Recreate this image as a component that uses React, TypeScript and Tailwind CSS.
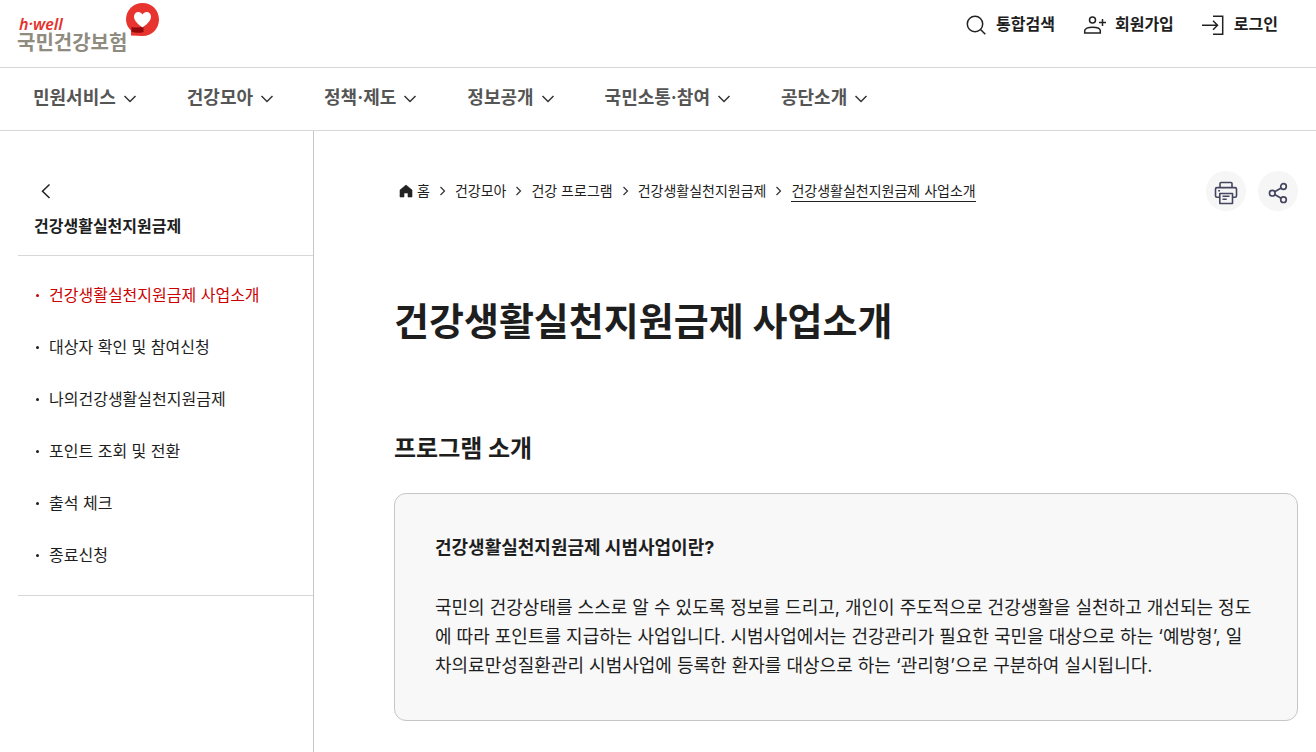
const navItems = ['민원서비스', '건강모아', '정책·제도', '정보공개', '국민소통·참여', '공단소개'];

const sideItems = [
    '건강생활실천지원금제 사업소개',
    '대상자 확인 및 참여신청',
    '나의건강생활실천지원금제',
    '포인트 조회 및 전환',
    '출석 체크',
    '종료신청',
];

const crumbs = ['건강모아', '건강 프로그램', '건강생활실천지원금제'];

function Logo() {
    return (
        <a href="#" className="relative block pt-4 leading-none">
            <span className="block pl-0.5 font-['Noto_Sans'] text-[16px] leading-4 font-semibold text-[#e4322d] italic">h·well</span>
            <span className="block text-[20px] leading-[22px] font-bold text-[#8f8c7f]">국민건강보험</span>
            {/* Speech balloon with heart */}
            <svg className="absolute top-0.5 left-[108px]" width="36" height="36" viewBox="0 0 36 36">
                <path d="M17.5 1C27 1 34 8.300 34 17.500S27 34 17.500 34L6 33.500V28.500C2.800 25.500 1 21.800 1 17.500 1 8.300 8.300 1 17.500 1Z" fill="#e7342f" />
                <path d="M6.500 25C10 25.800 14 25.800 18.500 24.800V30C14.500 31.300 10.500 31 6.500 29.800Z" fill="#94070c" />
                <path d="M17.500 25.500C13.500 22.500 9 19 9 14.500 9 11.800 11 10 13.300 10 15.200 10 16.700 11 17.500 12.600 18.300 11 19.800 10 21.700 10 24 10 26 11.800 26 14.500 26 19 21.500 22.500 17.500 25.500Z" fill="#fff" />
            </svg>
        </a>
    );
}

function SearchIcon() {
    return (
        <svg width="24" height="24" viewBox="0 0 24 24" fill="none" stroke="#222" strokeWidth="1.5">
            <circle cx="11" cy="12" r="7.700" />
            <path d="M16.500 17.500L21.300 22.300" />
        </svg>
    );
}

function JoinIcon() {
    return (
        <svg width="24" height="24" viewBox="0 0 24 24" fill="none" stroke="#222" strokeWidth="1.5">
            <circle cx="9.500" cy="8" r="3" />
            <path d="M1.700 21V18.800C1.700 16.500 5 15.200 9.500 15.200S17.300 16.500 17.300 18.800V21Z" />
            <path d="M16 10.500H23M19.500 7V14" />
        </svg>
    );
}

function LoginIcon() {
    return (
        <svg width="24" height="24" viewBox="0 0 24 24" fill="none" stroke="#222" strokeWidth="1.5">
            <path d="M11 4.200H20.700V22.200H11" />
            <path d="M0 13.200H15.500M11 8.700L15.500 13.200L11 17.700" />
        </svg>
    );
}

function PrintIcon() {
    return (
        <svg width="24" height="24" viewBox="0 0 24 24" fill="none" stroke="#45455f" strokeWidth="1.6" strokeLinejoin="round">
            <path d="M6 6.500V2.500Q6 1.500 7 1.500H17Q18 1.500 18 2.500V6.500" />
            <path d="M5.500 16.300H3Q1.500 16.300 1.500 14.800V8Q1.500 6.600 3 6.600H21Q22.500 6.600 22.500 8V14.800Q22.500 16.300 21 16.300H18.500" />
            <path d="M5.800 12.500H18.500V22.500H5.800ZM8.500 15.200H15.500M8.500 18.200H12.700M4.200 9.700H6" />
        </svg>
    );
}

function ShareIcon() {
    return (
        <svg width="24" height="24" viewBox="0 0 24 24" fill="none" stroke="#45455f" strokeWidth="1.7">
            <circle cx="17.500" cy="5.500" r="2.800" />
            <circle cx="6.300" cy="12.200" r="2.800" />
            <circle cx="17.500" cy="18.700" r="2.800" />
            <path d="M8.700 10.700L15.100 6.900M8.700 13.600L15.100 17.300" />
        </svg>
    );
}

function Separator() {
    return (
        <svg width="25" height="14" viewBox="0 0 25 14" fill="none" stroke="#333" strokeWidth="1.2">
            <path d="M10.500 3L14.500 7L10.500 11" />
        </svg>
    );
}

function Header() {
    return (
        <header>
            <div className="flex h-[68px] items-start justify-between border-b border-[#d8d8d8] pr-[38px] pl-[17px]">
                <Logo />
                <div className="flex gap-7 pt-3 text-[16px] leading-6 font-bold">
                    <a href="#" className="flex gap-2"><SearchIcon />통합검색</a>
                    <a href="#" className="flex gap-2"><JoinIcon />회원가입</a>
                    <a href="#" className="flex gap-2"><LoginIcon />로그인</a>
                </div>
            </div>
            <nav className="flex gap-[49px] border-b border-[#d8d8d8] px-[33px] pt-4 pb-[18px]">
                {navItems.map(item => (
                    <button key={item} type="button" className="flex items-center gap-1.5 text-[18px] leading-7 font-bold text-[#555]">
                        {item}
                        <svg width="16" height="16" viewBox="0 0 16 16" fill="none" stroke="#333" strokeWidth="1.5">
                            <path d="M2.500 6L8 11.500L13.500 6" />
                        </svg>
                    </button>
                ))}
            </nav>
        </header>
    );
}

function Sidebar() {
    return (
        <aside className="w-[314px] shrink-0 border-r border-[#c6c6c6] pl-[18px]">
            <div className="border-b border-[#d8d8d8] px-4 pt-12 pb-[17px]">
                <button type="button" aria-label="이전" className="block h-6 w-6">
                    <svg width="24" height="24" viewBox="0 0 24 24" fill="none" stroke="#222" strokeWidth="1.5">
                        <path d="M15.500 5.500L8.500 12.200L15.500 19" />
                    </svg>
                </button>
                <h2 className="mt-[11px] text-[16px] leading-6 font-bold">건강생활실천지원금제</h2>
            </div>
            <ul className="border-b border-[#d8d8d8] px-4 pt-[13px] pb-3.5">
                {sideItems.map((item, i) => (
                    <li key={item}>
                        <a
                            href="#"
                            className={`flex items-center gap-2.5 pl-0.5 text-[16px] leading-[52px] ${i === 0 ? 'text-[#cc0000]' : ''}`}
                        >
                            <span className="h-[3px] w-[3px] rounded-full bg-current" />
                            {item}
                        </a>
                    </li>
                ))}
            </ul>
        </aside>
    );
}

function Breadcrumb() {
    return (
        <nav className="flex items-center pl-[5px] text-[14px] leading-5">
            <a href="#" className="flex items-center gap-1">
                <svg width="14" height="14" viewBox="0 0 14 14" fill="#222">
                    <path d="M7 1L13 6V13H9V9H5V13H1V6Z" stroke="#222" strokeWidth="0.6" strokeLinejoin="round" />
                </svg>
                홈
            </a>
            {crumbs.map(c => (
                <span key={c} className="flex items-center">
                    <Separator />
                    <a href="#">{c}</a>
                </span>
            ))}
            <Separator />
            <a href="#" className="border-b border-[#222]">건강생활실천지원금제 사업소개</a>
        </nav>
    );
}

export default function App() {
    return (
        <div className="flex min-h-screen flex-col bg-white font-[Inter,'Noto_Sans_CJK_KR',sans-serif] text-[#1e1e1e]">
            <Header />
            <div className="flex flex-1">
                <Sidebar />
                <main className="min-w-0 flex-1 pt-10 pr-[18px] pb-8 pl-20">
                    <div className="flex items-center justify-between">
                        <Breadcrumb />
                        <div className="flex gap-3">
                            <button type="button" aria-label="인쇄" className="flex h-10 w-10 items-center justify-center rounded-full bg-[#f6f6f6] pt-1">
                                <PrintIcon />
                            </button>
                            <button type="button" aria-label="공유" className="flex h-10 w-10 items-center justify-center rounded-full bg-[#f6f6f6] pt-1">
                                <ShareIcon />
                            </button>
                        </div>
                    </div>
                    <h1 className="mt-[82px] text-[38px] leading-[56px] font-bold">건강생활실천지원금제 사업소개</h1>
                    <h2 className="mt-[82px] text-[24px] leading-9 font-bold">프로그램 소개</h2>
                    <section className="mt-[26px] rounded-xl border border-[#c6c6c6] bg-[#f8f8f8] p-10">
                        <h3 className="text-[18px] leading-7 font-bold">건강생활실천지원금제 시범사업이란?</h3>
                        <p className="mt-[31px] text-[18px] leading-[29px]">
                            국민의 건강상태를 스스로 알 수 있도록 정보를 드리고, 개인이 주도적으로 건강생활을 실천하고 개선되는 정도에 따라 포인트를 지급하는 사업입니다. 시범사업에서는 건강관리가 필요한 국민을 대상으로 하는 ‘예방형’, 일차의료만성질환관리 시범사업에 등록한 환자를 대상으로 하는 ‘관리형’으로 구분하여 실시됩니다.
                        </p>
                    </section>
                </main>
            </div>
        </div>
    );
}
